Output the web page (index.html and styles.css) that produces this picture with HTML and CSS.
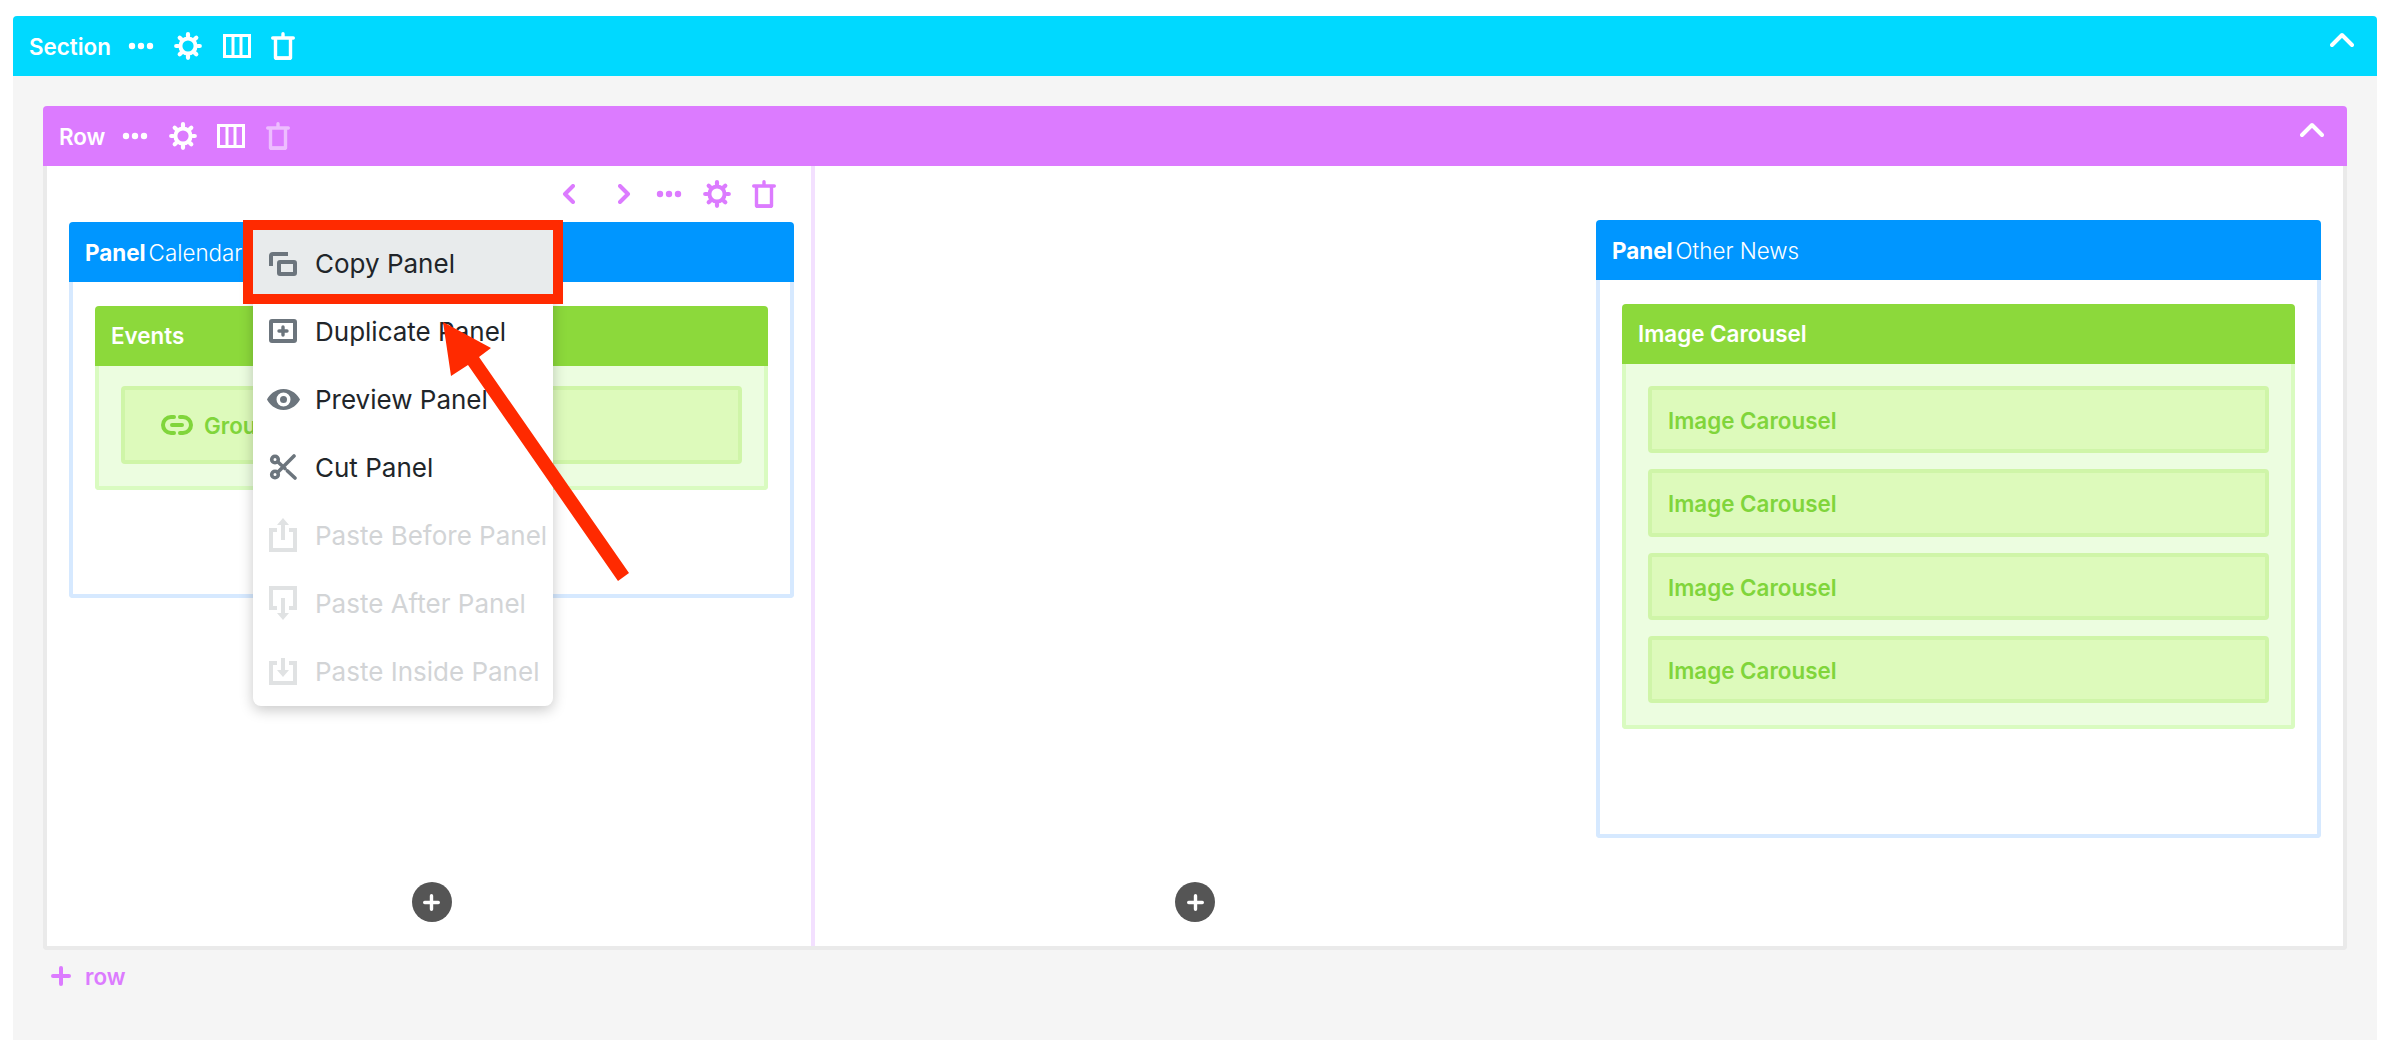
FILE: index.html
```html
<!DOCTYPE html>
<html lang="en">
<head>
    <meta charset="UTF-8">
    <title>Layout Builder</title>
    <link rel="stylesheet" href="styles.css">
</head>
<body>
    <svg class="icon-sprites" width="0" height="0">
        <symbol id="i-dots" viewBox="0 0 26 8"><circle cx="4" cy="4" r="3.2" fill="currentColor"/><circle cx="13" cy="4" r="3.2" fill="currentColor"/><circle cx="22" cy="4" r="3.2" fill="currentColor"/></symbol>
        <symbol id="i-gear" viewBox="0 0 28 28"><g fill="none" stroke="currentColor"><circle cx="14" cy="14" r="7.6" stroke-width="4"/><path stroke-width="4.2" stroke-linecap="round" d="M14 2.200v2M14 23.800v2M2.200 14h2M23.800 14h2M5.700 5.700l1.400 1.400M20.900 20.900l1.400 1.400M22.300 5.700l-1.400 1.400M7.100 20.900l-1.400 1.400"/></g></symbol>
        <symbol id="i-cols" viewBox="0 0 28 24"><g fill="none" stroke="currentColor" stroke-width="3"><rect x="1.5" y="1.5" width="25" height="21"/><path d="M10 2v20M18 2v20"/></g></symbol>
        <symbol id="i-trash" viewBox="0 0 24 28"><g fill="none" stroke="currentColor" stroke-width="3.4"><path stroke-linecap="round" d="M1.7 6h20.6M12 1.7V6"/><path stroke-linejoin="round" d="M4.5 6v20h15V6"/><path d="M4 26.2h16"/></g></symbol>
        <symbol id="i-up" viewBox="0 0 24 16"><path d="M2 13L12 3l10 10" fill="none" stroke="currentColor" stroke-width="4" stroke-linecap="round" stroke-linejoin="round"/></symbol>
        <symbol id="i-left" viewBox="0 0 13 20"><path d="M11 2L3 10l8 8" fill="none" stroke="currentColor" stroke-width="4" stroke-linecap="round" stroke-linejoin="round"/></symbol>
        <symbol id="i-right" viewBox="0 0 13 20"><path d="M2 2l8 8-8 8" fill="none" stroke="currentColor" stroke-width="4" stroke-linecap="round" stroke-linejoin="round"/></symbol>
        <symbol id="i-plus" viewBox="0 0 20 20"><path d="M10 2v16M2 10h16" fill="none" stroke="currentColor" stroke-width="4" stroke-linecap="round"/></symbol>
        <symbol id="i-copy" viewBox="0 0 28 24"><g fill="none" stroke="currentColor" stroke-width="4"><path d="M2 14V4q0-2 2-2h15"/><rect x="10" y="10" width="16" height="12" rx="1"/></g></symbol>
        <symbol id="i-dup" viewBox="0 0 28 24"><rect x="2" y="2" width="24" height="20" rx="1" fill="none" stroke="currentColor" stroke-width="4"/><path d="M14 8v8M10 12h8" fill="none" stroke="currentColor" stroke-width="3.4" stroke-linecap="round"/></symbol>
        <symbol id="i-eye" viewBox="0 0 33 21"><path fill="currentColor" fill-rule="evenodd" d="M16.500 0C25 0 30.800 6 33 10.500 30.800 15 25 21 16.500 21S2.200 15 0 10.500C2.200 6 8 0 16.500 0zM16.500 3.500a7 7 0 1 0 0 14 7 7 0 0 0 0-14z"/><circle cx="16.500" cy="10.500" r="3.500" fill="currentColor"/></symbol>
        <symbol id="i-cut" viewBox="0 0 26 26"><g fill="none" stroke="currentColor" stroke-width="3.600"><circle cx="5" cy="5.500" r="3.300"/><circle cx="5" cy="20.500" r="3.300"/><path stroke-linecap="round" d="M8 18L24 2M8 8l7 6.500M17.500 17L25 24"/></g></symbol>
        <symbol id="i-before" viewBox="0 0 28 34"><g fill="none" stroke="currentColor" stroke-width="4"><path d="M8 12H2v20h24V12h-6"/><path d="M14 22V4"/></g><path d="M14 0l6 7H8z" fill="currentColor"/></symbol>
        <symbol id="i-after" viewBox="0 0 28 34"><g fill="none" stroke="currentColor" stroke-width="4"><path d="M8 22H2V2h24v20h-6"/><path d="M14 12v16"/></g><path d="M14 34l-6-7h12z" fill="currentColor"/></symbol>
        <symbol id="i-inside" viewBox="0 0 28 28"><g fill="none" stroke="currentColor" stroke-width="4"><path d="M8 6H2v20h24V6h-6"/><path d="M14 1v12"/></g><path d="M14 20l-6-7h12z" fill="currentColor"/></symbol>
        <symbol id="i-link" viewBox="0 0 32 20"><g fill="none" stroke="currentColor" stroke-width="4" stroke-linecap="round"><path d="M13 2H10a8 8 0 0 0 0 16h3M19 2h3a8 8 0 0 1 0 16h-3M11 10h10"/></g></symbol>
    </svg>

    <div class="section">
        <div class="bar bar-section">
            <span class="bar-label">Section</span>
            <div class="tools">
                <svg class="ic-dots"><use href="#i-dots"/></svg>
                <svg class="ic-gear"><use href="#i-gear"/></svg>
                <svg class="ic-cols"><use href="#i-cols"/></svg>
                <svg class="ic-trash"><use href="#i-trash"/></svg>
            </div>
            <svg class="ic-up"><use href="#i-up"/></svg>
        </div>

        <div class="section-body">
            <div class="bar bar-row">
                <span class="bar-label">Row</span>
                <div class="tools">
                    <svg class="ic-dots"><use href="#i-dots"/></svg>
                    <svg class="ic-gear"><use href="#i-gear"/></svg>
                    <svg class="ic-cols"><use href="#i-cols"/></svg>
                    <svg class="ic-trash faded"><use href="#i-trash"/></svg>
                </div>
                <svg class="ic-up"><use href="#i-up"/></svg>
            </div>

            <div class="row-body">
                <!-- First column, with the menu open -->
                <div class="col col-first">
                    <div class="col-tools">
                        <svg class="ic-arrow gap-after"><use href="#i-left"/></svg>
                        <svg class="ic-arrow gap-small"><use href="#i-right"/></svg>
                        <svg class="ic-dots"><use href="#i-dots"/></svg>
                        <svg class="ic-gear"><use href="#i-gear"/></svg>
                        <svg class="ic-trash"><use href="#i-trash"/></svg>
                    </div>

                    <div class="panel panel-short">
                        <div class="panel-head"><b>Panel</b> Calendar</div>
                        <div class="panel-body">
                            <div class="block">
                                <div class="block-head">Events</div>
                                <div class="block-body block-body-group">
                                    <div class="item item-group">
                                        <svg class="ic-link"><use href="#i-link"/></svg>
                                        <span>Group Events</span>
                                    </div>
                                </div>
                            </div>
                        </div>
                    </div>

                    <button class="add-btn add-first"><svg><use href="#i-plus"/></svg></button>

                    <div class="menu">
                        <div class="menu-item marked"><svg class="ic-menu"><use href="#i-copy"/></svg>Copy Panel</div>
                        <div class="menu-item"><svg class="ic-menu"><use href="#i-dup"/></svg>Duplicate Panel</div>
                        <div class="menu-item"><svg class="ic-menu ic-eye"><use href="#i-eye"/></svg>Preview Panel</div>
                        <div class="menu-item"><svg class="ic-menu ic-cut"><use href="#i-cut"/></svg>Cut Panel</div>
                        <div class="menu-item disabled"><svg class="ic-menu ic-tall"><use href="#i-before"/></svg>Paste Before Panel</div>
                        <div class="menu-item disabled"><svg class="ic-menu ic-tall"><use href="#i-after"/></svg>Paste After Panel</div>
                        <div class="menu-item disabled"><svg class="ic-menu ic-inside"><use href="#i-inside"/></svg>Paste Inside Panel</div>
                    </div>
                </div>

                <!-- Empty column -->
                <div class="col">
                    <button class="add-btn"><svg><use href="#i-plus"/></svg></button>
                </div>

                <!-- Third column -->
                <div class="col col-last">
                    <div class="panel panel-tall">
                        <div class="panel-head"><b>Panel</b> Other News</div>
                        <div class="panel-body">
                            <div class="block">
                                <div class="block-head">Image Carousel</div>
                                <div class="block-body">
                                    <div class="item">Image Carousel</div>
                                    <div class="item">Image Carousel</div>
                                    <div class="item">Image Carousel</div>
                                    <div class="item">Image Carousel</div>
                                </div>
                            </div>
                        </div>
                    </div>
                </div>
            </div>

            <div class="add-row">
                <svg class="ic-plus"><use href="#i-plus"/></svg>
                <span>row</span>
            </div>
        </div>
    </div>

    <!-- Annotation arrow on top of the screenshot -->
    <svg class="annotation" viewBox="0 0 2390 1060">
        <polygon points="443,322 491,348 479,357 629,573 618,581 468,365 451,376" fill="#ff2a00"/>
    </svg>
</body>
</html>
```

FILE: styles.css
```css
:root {
    --section-color: #00d9ff;
    --row-color: #dc7bff;
    --panel-color: #0096ff;
    --green: #8cd93b;
    --green-text: #80d53b;
    --menu-icon: #6c757d;
}

body {
    font-family: 'Inter', 'Liberation Sans', sans-serif;
    margin: 0;
    padding: 16px 13px 20px;
    background: white;
    position: relative;
    overflow: hidden;
}

svg {
    display: block;
    flex: none;
}

.icon-sprites {
    position: absolute;
}

/* Section and row bars */
.bar {
    height: 60px;
    display: flex;
    align-items: center;
    color: white;
    border-radius: 4px 4px 0 0;
}

.bar-section {
    background: var(--section-color);
    padding: 0 23px 0 16px;
}

.bar-row {
    background: var(--row-color);
    padding: 0 23px 0 16px;
}

.bar-label {
    font-size: 22.4px;
    font-weight: 600;
    margin-right: 17px;
}

.tools {
    display: flex;
    align-items: center;
    gap: 20.5px;
}

.ic-dots { width: 26px; height: 8px; }
.ic-gear { width: 28px; height: 28px; }
.ic-cols { width: 28px; height: 24px; }
.ic-trash { width: 24px; height: 28px; }
.faded { opacity: 0.5; }

.ic-up {
    width: 24px;
    height: 16px;
    margin-left: auto;
    margin-bottom: 12px;
}

/* Section body */
.section-body {
    background: #f5f5f5;
    padding: 30px 30px 0;
    height: 964px;
    box-sizing: border-box;
}

.row-body {
    height: 784px;
    box-sizing: border-box;
    background: white;
    border: 4px solid #eaeaea;
    border-top: none;
    border-radius: 0 0 4px 4px;
    display: grid;
    grid-template-columns: 768px 1fr 768px;
}

.col {
    display: flex;
    flex-direction: column;
    align-items: center;
    position: relative;
}

.col-first {
    border-right: 4px solid #f3e0ff;
    align-items: stretch;
    padding: 0 17px 0 22px;
}

.col-last {
    align-items: stretch;
    padding: 54px 22px 0 21px;
}

.col-tools {
    height: 56px;
    display: flex;
    align-items: center;
    justify-content: flex-end;
    gap: 21px;
    padding-right: 18px;
    color: var(--row-color);
}

.ic-arrow { width: 13px; height: 20px; }
.gap-after { margin-right: 22px; }
.gap-small { margin-right: 4px; }

/* Panels */
.panel-head {
    height: 60px;
    display: flex;
    align-items: center;
    gap: 3px;
    padding-left: 16px;
    background: var(--panel-color);
    color: white;
    font-size: 22.4px;
    font-weight: 300;
    border-radius: 4px 4px 0 0;
}

.panel-head b {
    font-weight: 700;
}

.panel-body {
    border: 4px solid #d6e9ff;
    border-top: none;
    border-radius: 0 0 4px 4px;
    padding: 24px 22px 0;
    box-sizing: border-box;
}

.panel-short .panel-body { height: 316px; }
.panel-tall .panel-body { height: 558px; }

/* Green blocks */
.block-head {
    height: 60px;
    box-sizing: border-box;
    display: flex;
    align-items: center;
    padding: 0 0 2px 16px;
    background: var(--green);
    color: white;
    font-size: 22.4px;
    font-weight: 600;
    border-radius: 4px 4px 0 0;
}

.block-body {
    background: #ecfde0;
    border: 4px solid #d9fbc0;
    border-top: none;
    border-radius: 0 0 4px 4px;
    padding: 22px 22px 22px;
    display: flex;
    flex-direction: column;
    gap: 16px;
}

.block-body-group {
    padding-top: 20px;
}

.item {
    height: 67.3px;
    box-sizing: border-box;
    display: flex;
    align-items: center;
    gap: 11px;
    padding: 2px 0 0 16px;
    background: #ddfabb;
    border: 4px solid #cff5a8;
    border-radius: 4px;
    color: var(--green-text);
    font-size: 22.4px;
    font-weight: 600;
}

.item-group {
    height: 78px;
    padding: 0 0 0 36px;
}

.ic-link { width: 32px; height: 20px; }

/* Add buttons */
.add-btn {
    width: 40px;
    height: 40px;
    margin-top: auto;
    margin-bottom: 24px;
    padding: 0;
    border: none;
    border-radius: 50%;
    background: #555;
    color: white;
    display: flex;
    align-items: center;
    justify-content: center;
}

.add-btn svg {
    width: 17px;
    height: 17px;
}

.add-first {
    align-self: center;
}

.add-row {
    height: 20px;
    margin-top: 16px;
    padding-left: 8px;
    display: flex;
    align-items: center;
    gap: 14px;
    color: var(--row-color);
    font-size: 22.4px;
    font-weight: 600;
}

.ic-plus { width: 20px; height: 20px; }

/* Context menu */
.menu {
    position: absolute;
    left: 206px;
    top: 64px;
    width: 300px;
    background: white;
    border-radius: 0 0 8px 8px;
    box-shadow: 0 4px 14px rgba(0, 0, 0, 0.22);
}

.menu-item {
    height: 68px;
    box-sizing: border-box;
    display: flex;
    align-items: center;
    padding: 0 0 2px 16px;
    color: #212529;
    font-size: 26px;
    white-space: nowrap;
    position: relative;
}

.menu-item.marked {
    height: 64px;
    margin-bottom: 4px;
    padding: 3px 0 0 16px;
    background: #e8ebec;
    outline: 10px solid #ff2a00;
}

.menu-item.disabled {
    color: #d2d4d6;
}

.ic-menu {
    width: 28px;
    height: 24px;
    margin-right: 18px;
    color: var(--menu-icon);
}

.disabled .ic-menu {
    color: #e0e2e3;
}

.ic-eye {
    width: 33px;
    height: 21px;
    margin: 0 15px 0 -2px;
}

.ic-cut {
    height: 26px;
}

.ic-tall {
    height: 34px;
}

.ic-inside {
    height: 28px;
}

.annotation {
    position: absolute;
    left: 0;
    top: 0;
    width: 2390px;
    height: 1060px;
    pointer-events: none;
}
```
